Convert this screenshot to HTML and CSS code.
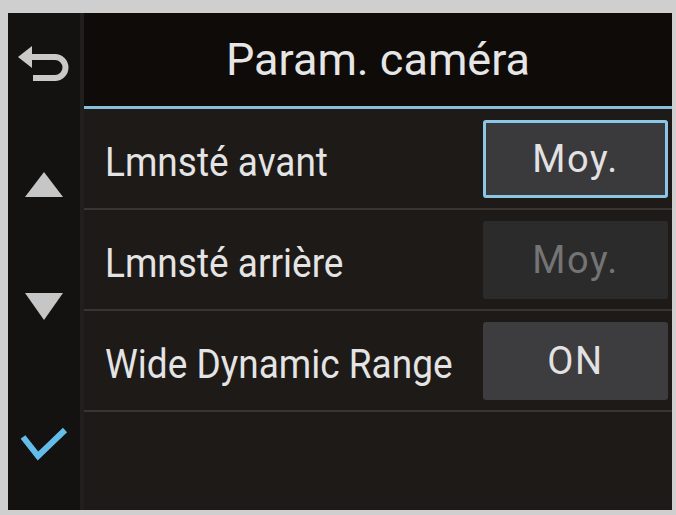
FILE: index.html
```html
<!DOCTYPE html>
<html lang="fr">
<head>
  <meta charset="UTF-8">
  <meta name="viewport" content="width=device-width, initial-scale=1.0">
  <title>Param. caméra</title>
  <link rel="stylesheet" href="styles.css">
</head>
<body>
  <div class="screen">
    <div class="sidebar">
      <svg class="icon back" width="52" height="40" viewBox="0 0 52 40">
        <path d="M0 12 L14 1 L14 23 Z" fill="#c9c9c9"/>
        <path d="M12 12 H37 A10.5 10.5 0 0 1 37 33 H15" fill="none" stroke="#c9c9c9" stroke-width="6"/>
      </svg>
      <svg class="icon up" width="38" height="25" viewBox="0 0 38 25">
        <path d="M19 0 L38 25 L0 25 Z" fill="#c6c6c6"/>
      </svg>
      <svg class="icon down" width="38" height="27" viewBox="0 0 38 27">
        <path d="M0 0 L38 0 L19 27 Z" fill="#c6c6c6"/>
      </svg>
      <svg class="icon check" width="48" height="34" viewBox="0 0 48 34">
        <path d="M3 10 L18 29 L45 3" fill="none" stroke="#62bde9" stroke-width="6"/>
      </svg>
    </div>
    <div class="main">
      <div class="header">Param. caméra</div>
      <div class="row">
        <span class="label">Lmnsté avant</span>
        <span class="value selected">Moy.</span>
      </div>
      <div class="row">
        <span class="label">Lmnsté arrière</span>
        <span class="value disabled">Moy.</span>
      </div>
      <div class="row">
        <span class="label">Wide Dynamic Range</span>
        <span class="value on">ON</span>
      </div>
    </div>
  </div>
</body>
</html>
```
FILE: styles.css
```css
body {
  margin: 0;
  padding: 13px 4px 5px 8px;
  background: #cfcfcf;
  font-family: Roboto, "Liberation Sans", sans-serif;
}
.screen {
  display: flex;
  height: 497px;
  background: #1d1a18;
}
.sidebar {
  width: 72px;
  background: #131211;
  border-right: 4px solid #211f1d;
  display: flex;
  flex-direction: column;
  align-items: center;
}
.icon {
  display: block;
}
.back {
  margin-top: 32px;
}
.up {
  margin-top: 87px;
}
.down {
  margin-top: 96px;
}
.check {
  margin-top: 107px;
}
.main {
  flex: 1;
  display: flex;
  flex-direction: column;
}
.header {
  height: 93px;
  background: #0e0b09;
  border-bottom: 3px solid #86bedc;
  color: #e6e6e6;
  font-size: 45px;
  display: flex;
  align-items: center;
  justify-content: center;
  transform-origin: center;
}
.row {
  height: 99px;
  border-bottom: 2px solid #383533;
  display: flex;
  align-items: center;
  justify-content: space-between;
  padding: 0 4px 0 21px;
}
.label {
  color: #e4e4e4;
  font-size: 37px;
  margin-top: 5px;
  transform: scaleY(1.12);
}
.value {
  width: 185px;
  height: 78px;
  box-sizing: border-box;
  display: flex;
  align-items: center;
  justify-content: center;
  font-size: 38px;
  letter-spacing: 1.5px;
  border-radius: 3px;
}
.selected {
  background: #3a393b;
  border: 3px solid #8cc6e6;
  color: #e2e2e2;
}
.disabled {
  background: #2c2b2b;
  color: #747474;
}
.on {
  background: #3d3c3f;
  color: #e2e2e2;
}
```
